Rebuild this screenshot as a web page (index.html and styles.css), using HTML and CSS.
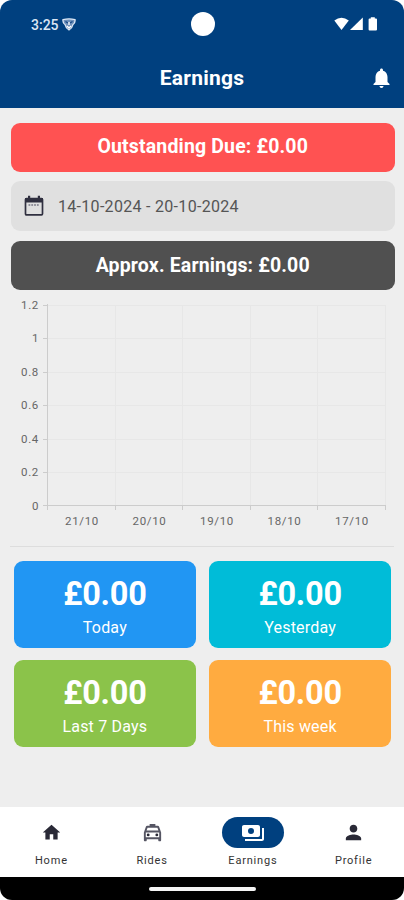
FILE: index.html
```html
<!DOCTYPE html>
<html lang="en">
<head>
<meta charset="utf-8">
<title>Earnings</title>
<link rel="stylesheet" href="styles.css">
</head>
<body>
<div class="phone">
  <header class="header">
    <div class="status">
      <div class="clock"><span class="time">3:25</span>
        <svg class="shield" viewBox="0 0 14 13"><path d="M1 1.600Q7 .1 13 1.600Q13.500 5 10.800 6.800Q10 10.500 7 12Q4 10.500 3.200 6.800Q.5 5 1 1.600Z" fill="#6f91bb" stroke="#dce7f5" stroke-width="1.300"/><path d="M3.500 3.500 6 5M10.500 3.500 8 5" stroke="#174985" stroke-width="1.300"/><path d="M7 4v3M5 8l2 2 2-2" fill="none" stroke="#fff" stroke-width="1.300"/></svg>
      </div>
      <span class="camera"></span>
      <svg class="signals" viewBox="0 0 44 14"><path d="M.3 3.500Q7.500-1.800 14.800 3.500L7.500 13Z"/><path d="M28.800.5V13H16Z"/><path d="M36.800.3h4v1.300h1.200q1 0 1 1v9.800q0 1-1 1h-6.400q-1 0-1-1V2.600q0-1 1-1h1.200Z"/></svg>
    </div>
    <div class="titlebar">
      <h1>Earnings</h1>
      <svg class="bell" viewBox="4 2 16 20"><path d="M12 22c1.100 0 2-.9 2-2h-4c0 1.100.9 2 2 2zm6-6v-5c0-3.070-1.630-5.640-4.500-6.320V4c0-.83-.67-1.500-1.500-1.500s-1.500.67-1.500 1.500v.68C7.640 5.360 6 7.920 6 11v5l-2 2v1h16v-1l-2-2z"/></svg>
    </div>
  </header>
  <main class="content">
    <div class="banner due">Outstanding Due: £0.00</div>
    <div class="dates">
      <svg class="calendar" viewBox="0 0 20 22"><path d="M2.500 3.500h15q1 0 1 1v14.300q0 1-1 1h-15q-1 0-1-1V4.500q0-1 1-1Z" fill="none" stroke="#303040" stroke-width="1.700"/><path d="M1 3h18v4.500H1ZM4 .8h2.200V4H4ZM13.800.8H16V4h-2.200Z" fill="#303040"/><path d="M4.500 10h11" stroke="#777785" stroke-width="1.500" stroke-dasharray="1.800 1"/></svg>
      <span>14-10-2024 - 20-10-2024</span>
    </div>
    <div class="banner approx">Approx. Earnings: £0.00</div>
    <svg class="chart" viewBox="0 0 404 256">
      <path class="grid" d="M47 15.500h339M47 48.500h339M47 82.500h339M47 115.500h339M47 149.500h339M47 182.500h339M115.500 15v200M182.500 15v200M250.500 15v200M317.500 15v200M385.500 15v200"/>
      <path class="axis" d="M47.500 14v206M43 15.500h4M43 48.500h4M43 82.500h4M43 115.500h4M43 149.500h4M43 182.500h4M43 215.500h343M115.500 215v5M182.500 215v5M250.500 215v5M317.500 215v5M385.500 215v5"/>
      <g class="ylabels"><text x="39" y="19">1.2</text><text x="39" y="52">1</text><text x="39" y="85.500">0.8</text><text x="39" y="119">0.6</text><text x="39" y="152.500">0.4</text><text x="39" y="186">0.2</text><text x="39" y="219.500">0</text></g>
      <g class="xlabels"><text x="82" y="235">21/10</text><text x="149.500" y="235">20/10</text><text x="217" y="235">19/10</text><text x="284.500" y="235">18/10</text><text x="352" y="235">17/10</text></g>
    </svg>
    <hr class="divider">
    <div class="cards">
      <section class="card today"><strong>£0.00</strong><span>Today</span></section>
      <section class="card yesterday"><strong>£0.00</strong><span>Yesterday</span></section>
      <section class="card week"><strong>£0.00</strong><span>Last 7 Days</span></section>
      <section class="card current"><strong>£0.00</strong><span>This week</span></section>
    </div>
  </main>
  <nav class="nav">
    <a class="tab"><span class="icon"><svg width="21" height="21" viewBox="0 0 24 24"><path d="M10 20v-6h4v6h5v-8h3L12 3 2 12h3v8z"/></svg></span><span>Home</span></a>
    <a class="tab"><span class="icon"><svg width="23" height="23" viewBox="0 0 24 24"><path d="M18.920 6.010C18.720 5.420 18.160 5 17.500 5H15V3H9v2H6.500c-.66 0-1.210.42-1.420 1.010L3 12v8c0 .55.450 1 1 1h1c.55 0 1-.45 1-1v-1h12v1c0 .55.450 1 1 1h1c.55 0 1-.45 1-1v-8zM6.850 7h10.290l1.040 3H5.810zM19 17H5v-5h14z" fill="#555563"/><circle cx="7.500" cy="14.500" r="1.500"/><circle cx="16.500" cy="14.500" r="1.500"/></svg></span><span>Rides</span></a>
    <a class="tab active"><span class="icon"><svg width="24" height="24" viewBox="0 0 24 24"><path fill-rule="evenodd" d="M19 14V6c0-1.100-.9-2-2-2H3c-1.100 0-2 .9-2 2v8c0 1.100.9 2 2 2h14c1.100 0 2-.9 2-2zm-9-1a3 3 0 1 1 0-6 3 3 0 0 1 0 6zm13-6v11c0 1.100-.9 2-2 2H4v-2h17V7h2z"/></svg></span><span>Earnings</span></a>
    <a class="tab"><span class="icon"><svg width="23" height="23" viewBox="0 0 24 24"><path d="M12 12c2.210 0 4-1.790 4-4s-1.790-4-4-4-4 1.790-4 4 1.790 4 4 4zm0 2c-2.670 0-8 1.340-8 4v2h16v-2c0-2.660-5.330-4-8-4z"/></svg></span><span>Profile</span></a>
  </nav>
  <footer class="system"><span class="handle"></span></footer>
</div>
</body>
</html>
```
FILE: styles.css
```css
* { box-sizing: border-box; }
body { margin: 0; background: #fff; font-family: Roboto, sans-serif; }
.phone { width: 404px; height: 900px; display: flex; flex-direction: column; overflow: hidden; border-radius: 12px; background: #eee; }
.header { height: 107.5px; flex: none; background: #00407f; color: #fff; }
.status { height: 48px; display: grid; grid-template-columns: 1fr 24px 1fr; align-items: center; padding: 0 26px 0 31px; }
.clock { display: flex; align-items: center; gap: 3px; color: #dce7f5; font-size: 14px; font-weight: 500; padding-top: 1px; }
.time { width: 28px; white-space: nowrap; }
.shield { width: 14px; height: 13px; }
.camera { width: 24px; height: 24px; border-radius: 50%; background: #fff; margin-left: -2px; }
.signals { width: 44px; height: 14px; justify-self: end; fill: #fff; }
.titlebar { height: 59px; display: grid; grid-template-columns: 1fr auto 1fr; align-items: center; padding: 0 14px; }
.titlebar h1 { margin: 0; grid-column: 2; font-size: 21px; line-height: 24px; font-weight: 700; letter-spacing: .25px; }
.bell { width: 17px; height: 20px; justify-self: end; fill: #fff; }
.content { flex: 1; display: flex; flex-direction: column; padding-top: 15px; }
.banner, .dates { height: 49px; margin: 0 9.5px 0 11px; border-radius: 9px; flex: none; display: flex; align-items: center; }
.banner { justify-content: center; color: #fff; font-size: 19.5px; font-weight: 700; letter-spacing: .15px; padding-bottom: 1px; }
.due { background: #ff5252; }
.approx { background: #505050; }
.dates { margin-top: 9.5px; margin-bottom: 10px; height: 50px; padding: 0 13px; gap: 14px; background: #e0e0e0; color: #555; font-size: 16px; letter-spacing: .3px; }
.calendar { width: 20px; height: 22px; }
.chart { width: 404px; height: 256px; flex: none; display: block; }
.grid { fill: none; stroke: #e7e7e7; }
.axis { fill: none; stroke: #ccc; }
.ylabels, .xlabels { fill: #666; font-size: 11.5px; letter-spacing: .65px; }
.ylabels { text-anchor: end; }
.xlabels { text-anchor: middle; }
.divider { width: 384px; height: 1px; border: 0; margin: 0 10px; background: #ddd; flex: none; }
.cards { display: grid; grid-template-columns: 1fr 1fr; grid-auto-rows: 87px; gap: 12px 13.5px; padding: 14px 13px 0 14px; }
.card { border-radius: 9px; color: #fff; display: flex; flex-direction: column; align-items: center; padding-top: 13px; }
.card strong { font-size: 32.5px; line-height: 40px; letter-spacing: -.25px; }
.card span { font-size: 16px; line-height: 20px; letter-spacing: .2px; margin-top: 4px; }
.today { background: #2196f3; }
.yesterday { background: #00bcd8; }
.week { background: #8bc34a; }
.current { background: #ffab40; }
.nav { height: 70.5px; flex: none; display: grid; grid-template-columns: repeat(4, 1fr); background: #fff; padding-left: 1px; }
.tab { display: flex; flex-direction: column; align-items: center; padding-top: 10.500px; color: #333; font-size: 11px; line-height: 14px; letter-spacing: .8px; }
.icon { width: 62px; height: 31px; border-radius: 16px; display: flex; align-items: center; justify-content: center; margin-bottom: 6px; }
.icon svg { fill: #292936; }
.active .icon { background: #00407f; }
.active .icon svg { fill: #fff; }
.system { height: 23px; flex: none; background: #000; display: flex; justify-content: center; align-items: center; }
.handle { width: 107px; height: 4px; border-radius: 2px; background: #f5f5f5; }
```
